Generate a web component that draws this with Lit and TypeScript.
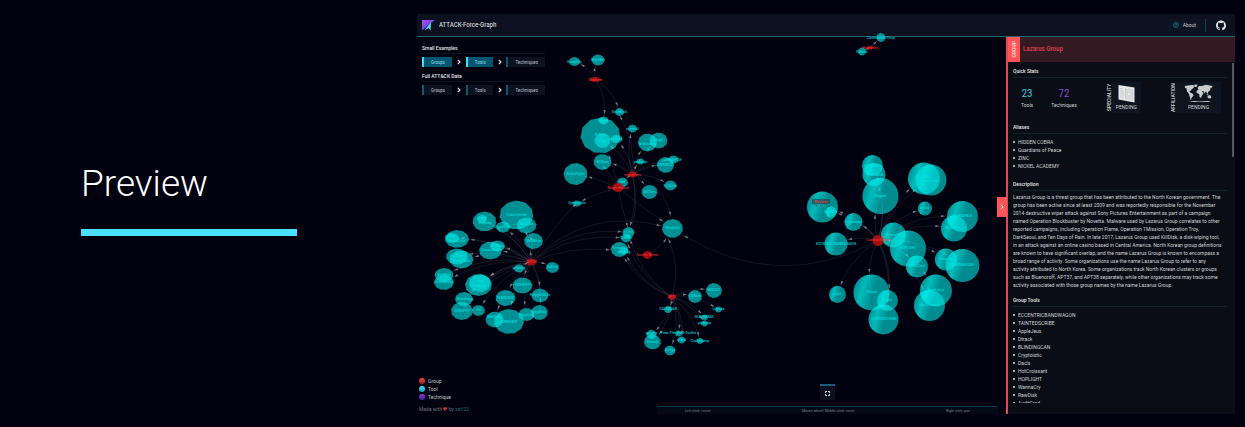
import { LitElement, html, css, svg } from "lit";
import { customElement, property } from "lit/decorators.js";
import { classMap } from "lit/directives/class-map.js";

type Shape = [x: number, y: number, rx: number, ry: number, label: string, labelShift?: number];
type Hub = { at: Shape; nodes: Shape[]; far: [number, number, number][]; bend: number; sphere?: boolean; oneWay?: boolean };

const HUBS: Hub[] = [
  {
    at: [531.5, 262, 4.5, 3.5, "APT29"],
    bend: 0.1,
    nodes: [
      [516.5, 215, 17, 14.5, "Cobalt Strike"],
      [484.5, 221.5, 12, 10, "Empire", 2],
      [482, 219, 5, 4, "meek", -1],
      [503, 227, 7, 5.5, "CloudDuke"],
      [526.5, 225.5, 10, 8, "SeaDuke", -1],
      [533.5, 241, 9.5, 8, "WellMess"],
      [457, 239, 12, 9, "PinchDuke", 2],
      [452, 238, 7, 5, "Net", -2],
      [490.5, 250.5, 11.5, 9, "CosmicDuke"],
      [497.5, 246, 7.5, 5.5, "GoldMax"],
      [457, 256.5, 11, 8, "FatDuke"],
      [461.5, 259.5, 12, 9, "PowerDuke", 2],
      [444, 275, 9.5, 7, "WellMail"],
      [444, 282.5, 10, 7.5, "GeminiDuke"],
      [478.5, 285, 13.5, 11, "OnionDuke", 1],
      [480, 283, 11, 9, "Sibot", -2],
      [519, 268.5, 5, 4, "ipconfig"],
      [552.5, 267.5, 6.5, 5.5, "AdFind"],
      [522.5, 285.5, 10, 8, "POSHSPY"],
      [540, 295.5, 8.5, 7, "PolyglotDuke"],
      [505.5, 298, 10, 8, "TEARDROP"],
      [464, 299, 9, 7, "Raindrop"],
      [462, 311, 11, 9, "SUNSPOT"],
      [478.5, 310.5, 6.5, 5.5, "Tor"],
      [494.5, 319.5, 9, 8, "MiniDuke", -2],
      [509, 321.5, 15, 12.5, "SUNBURST", 1],
      [526.5, 314.5, 8, 6.5, "CozyCar", 1],
      [539.5, 312.5, 8.5, 7.5, "RegDuke"],
    ],
    far: [[577, 203, -0.04], [662, 226, -0.18], [623, 232, -0.14], [621, 238, -0.12], [611, 250, -0.08]],
  },
  {
    at: [595.5, 79.5, 4.5, 2.5, "Molerats"],
    bend: 0.13,
    nodes: [
      [574.5, 61.5, 5.5, 4.5, "DustySky"],
      [598, 60, 6.5, 5.5, "MoleNet"],
      [603.5, 120.5, 5, 4, "Spark"],
      [619.5, 112, 4.5, 4, "DropBook"],
    ],
    far: [],
  },
  {
    at: [632.5, 174.5, 4, 3, "menuPass"],
    bend: 0.1,
    nodes: [
      [602.5, 140.5, 8, 7.5, "Ping"],
      [616.5, 139, 6, 4, "certutil"],
      [632.5, 128.5, 4.5, 4, "esentutl"],
      [647.5, 142.5, 9.5, 9, "RedLeaves", 1],
      [658.5, 140.5, 9, 8, "PlugX", -1],
      [640.5, 161.5, 4, 3, "pwdump"],
      [665.5, 165, 8.5, 8, "UPPERCUT"],
      [673.5, 159.5, 5, 4, "SNUGRIDE"],
      [622.5, 182.5, 5.5, 5, "Net", -1],
      [670.5, 185.5, 6, 5, "EvilGrab"],
      [649.5, 192, 8, 7, "ChChes"],
      [602.5, 162, 9, 8, "RGDoor"],
    ],
    far: [[671, 217, -0.18], [630, 227, -0.08], [628, 240, -0.1], [619.5, 115, 0.1]],
  },
  {
    at: [618, 187.5, 5.5, 4.5, "Magic Hound"],
    bend: 0.04,
    nodes: [
      [600.5, 135.5, 20, 18, "PsExec", -1],
      [575.5, 174, 12, 11, "DownPaper"],
      [577, 203.5, 4.5, 3, "Systeminfo"],
    ],
    far: [[664, 222, 0.02], [602, 165, 0.03], [628, 228, 0.02]],
  },
  {
    at: [647.5, 255, 4.5, 4, "Scarlet Mimic"],
    bend: -0.1,
    nodes: [[672.5, 228.5, 10.5, 9.5, "Mimikatz"]],
    far: [],
  },
  {
    at: [672, 297, 3.5, 3, "APT1"],
    bend: -0.12,
    oneWay: true,
    nodes: [
      [628.5, 232.5, 6, 5.5, "xCmd"],
      [626, 238, 5, 4.5, "Tasklist"],
      [619.5, 249.5, 8.5, 7.5, "PoisonIvy", -1],
      [624, 251, 5, 3.5, "ipconfig", 1],
      [714, 290.5, 8, 7.5, "BISCUIT"],
      [695, 296.5, 7, 6.5, "CCBkdr"],
      [718.5, 309.5, 3.5, 3, "Lslsass"],
      [668, 309.5, 4, 3.5, "CALENDAR"],
      [704.5, 317.5, 3.5, 3, "GLOOXMAIL"],
      [704.5, 323.5, 3.5, 3, "pwdump"],
      [700, 341, 3.5, 3, "Cachedump"],
      [678.5, 333.5, 3.5, 3, "Pass-The-Hash Toolkit"],
      [681.5, 340, 4, 3.5, "xCmd"],
      [651.5, 334.5, 5, 4.5, "WEBC2"],
      [652.5, 342, 8.5, 7.5, "Seasalt"],
      [670, 350.5, 5.5, 5, "Auriga"],
    ],
    far: [[668, 238, 0.12]],
  },
  {
    at: [878, 240.5, 5.5, 5.5, "Lazarus Group"],
    bend: 0.12,
    sphere: true,
    nodes: [
      [872.5, 165.5, 10.5, 10.5, "HARDRAIN"],
      [874, 174.5, 11.5, 11.5, "TYPEFRAME"],
      [880.5, 196, 18, 18, "Volgmer"],
      [924, 178.5, 16, 16, "BADCALL", -2],
      [931, 180, 15.5, 15.5, "Bankshot", 1],
      [822.5, 207, 15.5, 15.5, "", 0],
      [831, 212, 5.5, 5.5, "RawDisk"],
      [853.5, 222, 9, 9, "Cryptoistic"],
      [836, 244, 11.5, 11.5, "ECCENTRICBANDWAGON"],
      [925, 208.5, 7, 7, "netsh"],
      [962.5, 216.5, 15.5, 15.5, "KEYMARBLE"],
      [954, 228.5, 13, 13, "FALLCHILL"],
      [893.5, 235, 12.5, 12.5, "WannaCry"],
      [908, 248.5, 18, 18, "HOPLIGHT"],
      [917, 266.5, 11, 11, "AuditCred"],
      [946, 259.5, 11, 11, "Proxysvc"],
      [962.5, 265.5, 17, 16.5, "BLINDINGCAN"],
      [936, 290.5, 16, 16, "AppleJeus"],
      [929.5, 305.5, 15.5, 15.5, "HotCroissant"],
      [871.5, 292.5, 18, 18, "Dtrack"],
      [887.5, 300.5, 10.5, 10.5, "Dacls"],
      [883.5, 319.5, 15, 15, "TAINTEDSCRIBE"],
      [837.5, 294.5, 8.5, 8.5, "route"],
    ],
    far: [[683, 235, -0.18]],
  },
  {
    at: [870, 47.5, 2.5, 2, "Honeybee"],
    bend: 0,
    nodes: [
      [881, 37.5, 4.5, 4.5, "Catchamas/Thrip"],
      [862, 51.5, 4, 4, "PsExec"],
    ],
    far: [],
  },
];

const polygon = ([x, y, rx, ry]: Shape) =>
  Array.from({ length: 11 }, (_, i) => {
    const a = (i / 11) * Math.PI * 2 + x;
    return `${(x + Math.cos(a) * rx).toFixed(1)},${(y + Math.sin(a) * ry).toFixed(1)}`;
  }).join(" ");

const edge = (x1: number, y1: number, x2: number, y2: number, bend: number, gap: number) => {
  const dx = x2 - x1;
  const dy = y2 - y1;
  const len = Math.hypot(dx, dy);
  const cx = (x1 + x2) / 2 - dy * bend * 1.6;
  const cy = (y1 + y2) / 2 + dx * bend * 1.6;
  const t = Math.max(0.4, 1 - (gap + 3) / len);
  const u = 1 - t;
  const ax = u * u * x1 + 2 * u * t * cx + t * t * x2;
  const ay = u * u * y1 + 2 * u * t * cy + t * t * y2;
  const angle = (Math.atan2(u * (cy - y1) + t * (y2 - cy), u * (cx - x1) + t * (x2 - cx)) * 180) / Math.PI;
  return svg`<path class="edge" d="M${x1} ${y1}Q${cx} ${cy} ${x2} ${y2}"/>
    <path class="arrow" d="M2 0L-2 1.2V-1.2Z" transform="translate(${ax} ${ay}) rotate(${angle})"/>`;
};

@customElement("force-graph")
export class ForceGraph extends LitElement {
  static styles = css`
    :host { display: block; position: absolute; inset: 0; }
    svg { display: block; width: 100%; height: 100%; overflow: visible; }
    .edge { fill: none; stroke: #6c7480; stroke-opacity: 0.32; stroke-width: 0.6; }
    .arrow { fill: #a9adb4; fill-opacity: 0.65; }
    .tool { fill: #00e8e6; fill-opacity: 0.62; }
    .sphere { fill: url(#shade); }
    .hub { fill: #b30d12; fill-opacity: 0.9; }
    text { font: 4px "Roboto Condensed", "Liberation Sans Narrow", Roboto, sans-serif; text-anchor: middle; fill: #00e4e2; }
    .hub-label { fill: #ff3c3c; }
    .tip { fill: #204f58; fill-opacity: 0.8; }
  `;

  render() {
    return html`<svg viewBox="417 37 589 377" role="img" aria-label="Groups and tools">
      <defs>
        <linearGradient id="shade" x1="0" y1="0.2" x2="1" y2="0.5">
          <stop offset="0" stop-color="#00dcd8" stop-opacity="0.62" />
          <stop offset="0.3" stop-color="#00f0ec" stop-opacity="0.78" />
          <stop offset="0.6" stop-color="#00e8e6" stop-opacity="0.6" />
          <stop offset="1" stop-color="#00e8e6" stop-opacity="0.6" />
        </linearGradient>
      </defs>
      ${HUBS.map(({ at, nodes, far, bend, oneWay }) => [
        nodes.map((n) => edge(at[0], at[1], n[0], n[1], oneWay || n[0] < at[0] ? bend : -bend, n[2])),
        far.map(([x, y, b]) => edge(at[0], at[1], x, y, b, 0)),
      ])}
      ${HUBS.map(({ nodes, sphere }) =>
        nodes.map((n) =>
          sphere
            ? svg`<ellipse class="sphere" cx=${n[0]} cy=${n[1]} rx=${n[2]} ry=${n[3]} />`
            : svg`<polygon class="tool" points=${polygon(n)} />`
        )
      )}
      ${HUBS.map(({ at }) => svg`<ellipse class="hub" cx=${at[0]} cy=${at[1]} rx=${at[2]} ry=${at[3]} />`)}
      ${HUBS.map(({ at, nodes }) => [
        nodes.map((n) => svg`<text x=${n[0]} y=${n[1] + 1 + (n[5] ?? 0)}>${n[4]}</text>`),
        svg`<text class="hub-label" x=${at[0]} y=${at[1] + 1}>${at[4]}</text>`,
      ])}
      <rect class="tip" x="812" y="199" width="18" height="8" />
      <text class="hub-label" x="821" y="203">Machete</text>
      <text x="821" y="207">BANKSHOT</text>
    </svg>`;
  }
}

@customElement("filter-row")
export class FilterRow extends LitElement {
  @property() heading = "";
  @property({ type: Number }) active = 0;

  static styles = css`
    :host { display: block; }
    h2 { margin: 0; padding-bottom: 2px; border-bottom: 1px solid #08151f; font-size: 5px; line-height: 6px; font-weight: 500; color: #e4e6ea; }
    .row { display: flex; align-items: center; justify-content: space-between; padding-top: 3px; }
    button { height: 10px; padding: 0 7px; border: 0; border-left: 2px solid #0d5a6d; background: #0e1220; color: #b8bcc6; font: 5px/10px "Roboto Condensed", "Liberation Sans Narrow", Roboto, sans-serif; }
    .on { background: #025670; border-color: #3fdcf7; color: #8fd5e2; }
    svg { width: 4px; height: 6px; fill: none; stroke: #e8eaee; stroke-width: 1.2; }
  `;

  render() {
    const chevron = html`<svg viewBox="0 0 4 6"><path d="M.8.8L3 3L.8 5.2" /></svg>`;
    return html`<h2>${this.heading}</h2>
      <div class="row">
        ${["Groups", "Tools", "Techniques"].map(
          (name, i) => html`${i ? chevron : ""}<button class=${classMap({ on: i < this.active })}>${name}</button>`
        )}
      </div>`;
  }
}

@customElement("group-panel")
export class GroupPanel extends LitElement {
  static styles = css`
    :host { display: flex; flex-direction: column; min-height: 0; box-sizing: border-box; border-left: 2px solid #e8474e; background: #0a0d15; color: #cfd2d6; font: 5px/8px Roboto, sans-serif; position: relative; }
    .head { display: flex; flex: none; height: 25px; background: #331a22; }
    .kind { width: 12px; display: grid; place-items: center; background: #ff5558; color: #ffdcdc; }
    .side { writing-mode: vertical-rl; transform: rotate(180deg); font-weight: 500; }
    h1 { margin: 0; padding-left: 3px; font: 7px/25px "Roboto Condensed", "Liberation Sans Narrow", Roboto, sans-serif; color: #f04c53; }
    .body { flex: 1; min-height: 0; overflow: hidden; margin: 5px 8px 11px 5px; }
    h2 { margin: 10px 0 4px; padding-bottom: 2px; border-bottom: 1px solid #11232a; font-size: 5px; line-height: 8px; font-weight: 500; color: #e4e6ea; }
    .first { margin-top: 0; }
    .after-text { margin-top: 7px; }
    ul { margin: 0; padding: 0; list-style: none; }
    li { display: flex; align-items: center; gap: 3px; }
    li::before { content: ""; width: 2px; height: 2px; border-radius: 50%; background: #dfe1e4; }
    .text { margin: -2px 0 0; white-space: pre-line; }
    .stats { display: flex; justify-content: space-between; height: 31px; padding-right: 6px; }
    .stat { display: flex; flex-direction: column; align-items: center; justify-content: center; }
    .numbers { display: flex; gap: 18px; padding-left: 8px; }
    .value { font: 11px/14px "Roboto Condensed", "Liberation Sans Narrow", Roboto, sans-serif; color: #3cc8e4; }
    .purple { color: #7f4bcc; }
    .media { display: flex; align-items: stretch; }
    .media .side { text-align: center; width: 6px; line-height: 6px; }
    figure { margin: 0; width: 29px; background: #0e1520; display: flex; flex-direction: column; align-items: center; justify-content: center; }
    .wide { width: 45px; }
    .doc { width: 17px; height: 19px; }
    .map { width: 30px; height: 19px; }
    .thumb { position: absolute; right: 1px; top: 26px; width: 2px; height: 94px; background: #55585e; }
    .tab { position: absolute; left: -11px; top: 160px; width: 10px; height: 20px; padding: 0; border: 0; background: #ff5558; display: grid; place-items: center; }
    .tab svg { width: 4px; height: 6px; fill: none; stroke: #fff; stroke-width: 1; }
  `;

  private list(items: string[]) {
    return html`<ul>${items.map((item) => html`<li>${item}</li>`)}</ul>`;
  }

  render() {
    return html`<button class="tab" aria-label="Collapse"><svg viewBox="0 0 4 6"><path d="M.8.8L3 3L.8 5.2" /></svg></button>
      <div class="head"><div class="kind"><span class="side">GROUP</span></div><h1>Lazarus Group</h1></div>
      <div class="body">
        <h2 class="first">Quick Stats</h2>
        <div class="stats">
          <div class="numbers">
            <div class="stat"><span class="value">23</span><span>Tools</span></div>
            <div class="stat"><span class="value purple">72</span><span>Techniques</span></div>
          </div>
          <div class="media"><span class="side">SPECIALITY</span>
            <figure><svg class="doc" viewBox="0 0 17 19">
              <path fill="#e8e8e8" d="M.5 1L16.5 3.5V18.5L.5 15.5Z" />
              <path stroke="#a9abb0" stroke-width=".5" fill="none" d="M2 4.5L5 5M2 6.5L5 7M3 8V14M5 7V15M7.5 4V15M9 5V15.5M11 4.5V9M11 11V16M13 5V16M14.8 6V16" />
            </svg><figcaption>PENDING</figcaption></figure></div>
          <div class="media"><span class="side">AFFILIATION</span>
            <figure class="wide"><svg class="map" viewBox="0 0 30 19" fill="#c9cbcd">
              <path d="M1 2L4 1.5L8 1L11 1.5L9.5 4L7.5 5.5L6.5 7L5.5 6.5L6 8.5L8.5 9.5L9.5 11.5L7.5 14L6.8 16.5L5.8 13L5 10L3 7.5L2.5 4.5L.8 3.5Z" />
              <path d="M10.5.5L13.5.8L12.5 3L11 3Z" />
              <path d="M13.5 4L15 2L18 2L22 .8L28.5 2L28 3.5L26.5 4L26 6.5L24.5 7.5L23.5 10L22 7.5L20.5 9.5L19.5 7L18 7L19.5 9L18 11.5L17 14L15.5 13L15.2 10L12.8 9L12.5 7L14.5 5.5Z" />
              <path d="M23.5 12L26 11L27.5 13.5L26 14.5L23.8 14ZM22 9.8L25 11L23.5 11.2ZM5 18L10 17L15 17.6L24 17L27 18Z" />
            </svg><figcaption>PENDING</figcaption></figure></div>
        </div>
        <h2>Aliases</h2>
        ${this.list(["HIDDEN COBRA", "Guardians of Peace", "ZINC", "NICKEL ACADEMY"])}
        <h2>Description</h2>
        <p class="text">Lazarus Group is a threat group that has been attributed to the North Korean government. The
group has been active since at least 2009 and was reportedly responsible for the November
2014 destructive wiper attack against Sony Pictures Entertainment as part of a campaign
named Operation Blockbuster by Novetta. Malware used by Lazarus Group correlates to other
reported campaigns, including Operation Flame, Operation 1Mission, Operation Troy,
DarkSeoul, and Ten Days of Rain. In late 2017, Lazarus Group used KillDisk, a disk-wiping tool,
in an attack against an online casino based in Central America. North Korean group definitions
are known to have significant overlap, and the name Lazarus Group is known to encompass a
broad range of activity. Some organizations use the name Lazarus Group to refer to any
activity attributed to North Korea. Some organizations track North Korean clusters or groups
such as Bluenoroff, APT37, and APT38 separately, while other organizations may track some
activity associated with those group names by the name Lazarus Group.</p>
        <h2 class="after-text">Group Tools</h2>
        ${this.list(["ECCENTRICBANDWAGON", "TAINTEDSCRIBE", "AppleJeus", "Dtrack", "BLINDINGCAN", "Cryptoistic", "Dacls", "HotCroissant", "HOPLIGHT", "WannaCry", "RawDisk", "AuditCred"])}
      </div>
      <div class="thumb"></div>`;
  }
}

@customElement("app-root")
export class AppRoot extends LitElement {
  static styles = css`
    :host { display: grid; grid-template-columns: 407fr 818fr; box-sizing: border-box; height: 100vh; padding: 14px 10px 13px; background: #01010f; color: #fff; font: 5px/8px Roboto, sans-serif; }
    .intro { align-self: center; padding: 0 120px 32px 71px; }
    .title { margin: 0; font-size: 37px; line-height: 48px; font-weight: 300; padding-bottom: 21px; border-bottom: 7px solid #4adeff; }
    .app { display: flex; flex-direction: column; min-height: 0; }
    .bar { display: flex; align-items: center; flex: none; height: 22px; padding: 0 9px 0 5px; border-bottom: 1px solid #246478; background: #0d101e; }
    .logo { width: 13px; height: 11px; }
    .name { flex: 1; padding-left: 4px; font: 7px/22px "Roboto Condensed", "Liberation Sans Narrow", Roboto, sans-serif; color: #e0e2e8; }
    .about { display: flex; align-items: center; gap: 4px; height: 12px; padding: 0 5px; border: 0; background: #0f1422; color: #c7cad0; font: 5px/12px Roboto, sans-serif; }
    .about svg { width: 6px; height: 6px; }
    .github { display: block; margin-left: 4px; padding-left: 10px; border-left: 1px solid #0e4350; height: 13px; }
    .github svg { width: 10px; height: 13px; fill: #dfe3e8; display: block; }
    .main { flex: 1; min-height: 0; display: grid; grid-template-columns: 72fr 28fr; }
    .canvas { position: relative; display: flex; flex-direction: column; min-height: 0; }
    .filters { position: relative; width: 123px; padding: 8px 5px; display: grid; gap: 6px; }
    .lower { position: relative; margin-top: auto; display: grid; grid-template-columns: 240fr 341fr; padding-right: 8px; align-items: end; }
    .legend { display: grid; padding-left: 2px; color: #c4c6cc; }
    .key { display: flex; align-items: center; gap: 3px; }
    .key::before { content: ""; width: 6px; height: 6px; border-radius: 50%; background: linear-gradient(#f0473f, #a8171a); }
    .tool::before { background: linear-gradient(#3fe4ee, #10a3c4); }
    .technique::before { background: linear-gradient(#8a35d8, #4c17a0); }
    .made { color: #70737e; margin: 4px 0 1px; }
    .made svg { width: 4px; height: 4px; fill: #c92f3e; }
    .made a { color: #146f78; text-decoration: none; }
    .controls { display: flex; flex-direction: column; align-items: center; gap: 6px; }
    .full { width: 15px; height: 16px; padding: 0; border: 0; border-top: 2px solid #1b5c74; background: #0d111e; display: grid; place-items: center; }
    .full svg { width: 5px; height: 5px; fill: none; stroke: #d8dade; }
    .hints { align-self: stretch; display: flex; justify-content: space-between; padding: 0 28px; border-top: 1px solid #05384c; background: #050916; color: #777b86; font-family: "Roboto Condensed", "Liberation Sans Narrow", Roboto, sans-serif; font-size: 4px; line-height: 7px; }
  `;

  render() {
    return html`<section class="intro"><h1 class="title">Preview</h1></section>
      <div class="app">
        <header class="bar">
          <svg class="logo" viewBox="0 0 13 11">
            <defs><linearGradient id="g" x1="0" y1="0" x2="1" y2="1"><stop offset="0" stop-color="#b04cf0" /><stop offset="1" stop-color="#3b3ad0" /></linearGradient></defs>
            <path fill="url(#g)" d="M0 0H13L0 10.5Z" />
            <path fill="#55d7f7" d="M9 2.5L8.5 10.5L6.5 8L2.5 10.5L6 5.5Z" />
            <path fill="#1c2460" d="M7 4.5L4 8L5.5 5Z" />
          </svg>
          <span class="name">ATTACK-Force-Graph</span>
          <button class="about"><svg viewBox="0 0 6 6" fill="none" stroke="#1593ae" stroke-width=".7"><circle cx="3" cy="3" r="2.4" /><path d="M2.2 2.5Q3 1.3 3.8 2.3L3 3.2V3.6M3 4.2V4.8" /></svg>About</button>
          <a class="github" href="#" aria-label="GitHub"><svg viewBox="0 0 16 16"><path d="M8 0C3.58 0 0 3.58 0 8c0 3.54 2.29 6.53 5.47 7.59.4.07.55-.17.55-.38 0-.19-.01-.82-.01-1.49-2.01.37-2.53-.49-2.69-.94-.09-.23-.48-.94-.82-1.13-.28-.15-.68-.52-.01-.53.63-.01 1.08.58 1.23.82.72 1.21 1.87.87 2.33.66.07-.52.28-.87.51-1.07-1.78-.2-3.64-.89-3.64-3.95 0-.87.31-1.59.82-2.15-.08-.2-.36-1.02.08-2.12 0 0 .67-.21 2.2.82a7.6 7.6 0 0 1 4 0c1.53-1.04 2.2-.82 2.2-.82.44 1.1.16 1.92.08 2.12.51.56.82 1.27.82 2.15 0 3.07-1.87 3.75-3.65 3.95.29.25.54.73.54 1.48 0 1.07-.01 1.93-.01 2.2 0 .21.15.46.55.38A8.01 8.01 0 0 0 16 8c0-4.42-3.58-8-8-8Z" /></svg></a>
        </header>
        <div class="main">
          <div class="canvas">
            <force-graph></force-graph>
            <div class="filters">
              <filter-row heading="Small Examples" active="2"></filter-row>
              <filter-row heading="Full ATT&amp;CK Data"></filter-row>
            </div>
            <div class="lower">
              <div class="legend">
                <span class="key">Group</span><span class="key tool">Tool</span><span class="key technique">Technique</span>
                <p class="made">Made with <svg viewBox="0 0 8 8" role="img" aria-label="love"><path d="M4 8L0 3.5V1.5L1.5 0L4 1.5L6.5 0L8 1.5V3.5Z" /></svg> by <a href="#">seV22</a></p>
              </div>
              <div class="controls">
                <button class="full" aria-label="Full screen"><svg viewBox="0 0 5 5"><path d="M.5 2V.5H2M3 .5H4.5V2M4.5 3V4.5H3M2 4.5H.5V3" /></svg></button>
                <div class="hints"><span>Left click: rotate</span><span>Mouse wheel/ Middle click: zoom</span><span>Right click: pan</span></div>
              </div>
            </div>
          </div>
          <group-panel></group-panel>
        </div>
      </div>`;
  }
}
